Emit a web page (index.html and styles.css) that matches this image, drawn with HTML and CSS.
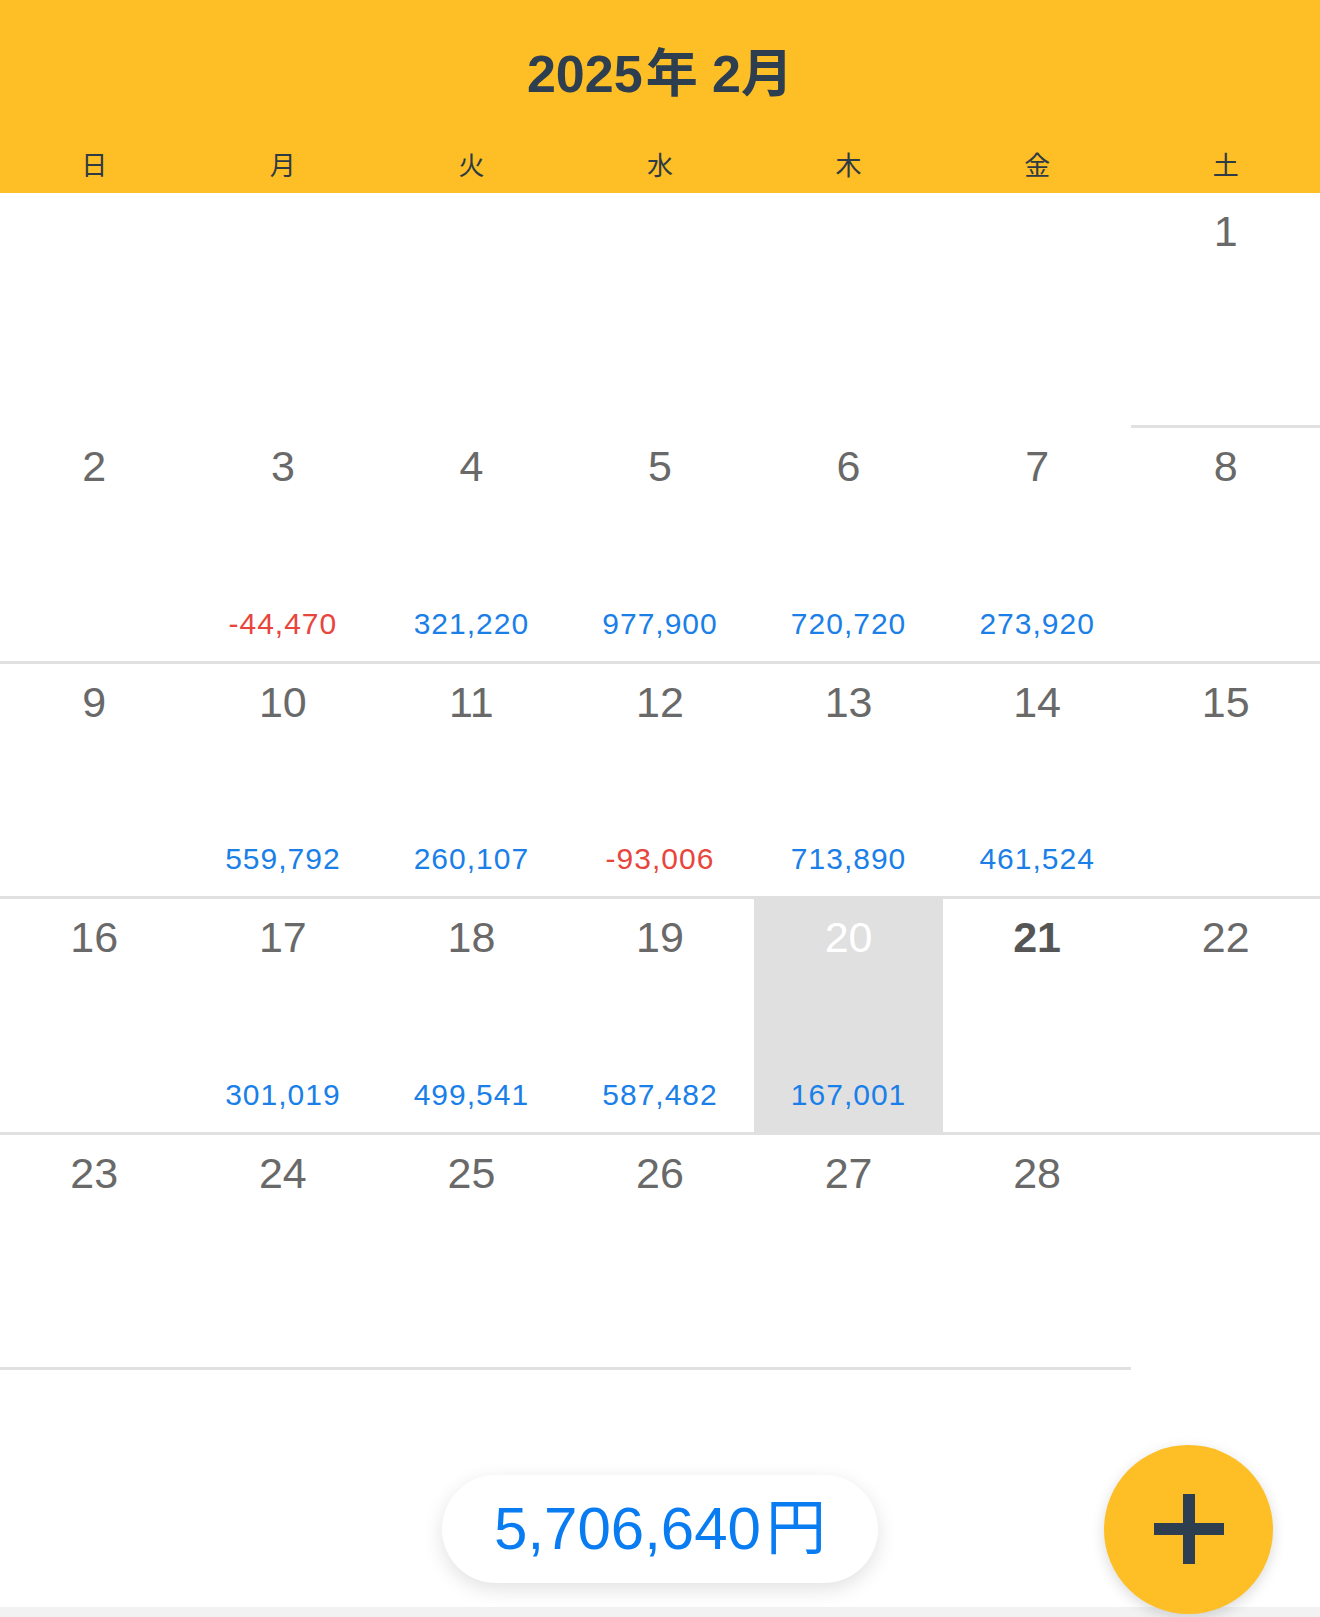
FILE: index.html
```html
<!DOCTYPE html>
<html lang="ja">
<head>
    <meta charset="UTF-8">
    <meta name="viewport" content="width=device-width, initial-scale=1.0">
    <title>カレンダー</title>
    <link rel="stylesheet" href="styles.css">
</head>
<body>
    <div class="app">
        <header class="calendar-header">
            <h1 class="month-title">2025<span class="unit">年</span> 2月</h1>
            <div class="weekdays">
                <span>日</span>
                <span>月</span>
                <span>火</span>
                <span>水</span>
                <span>木</span>
                <span>金</span>
                <span>土</span>
            </div>
        </header>

        <div class="calendar-grid">
            <!-- week 1 -->
            <div class="cell empty"></div>
            <div class="cell empty"></div>
            <div class="cell empty"></div>
            <div class="cell empty"></div>
            <div class="cell empty"></div>
            <div class="cell empty"></div>
            <div class="cell"><span class="day">1</span></div>

            <!-- week 2 -->
            <div class="cell"><span class="day">2</span></div>
            <div class="cell"><span class="day">3</span><span class="amount minus">-44,470</span></div>
            <div class="cell"><span class="day">4</span><span class="amount">321,220</span></div>
            <div class="cell"><span class="day">5</span><span class="amount">977,900</span></div>
            <div class="cell"><span class="day">6</span><span class="amount">720,720</span></div>
            <div class="cell"><span class="day">7</span><span class="amount">273,920</span></div>
            <div class="cell"><span class="day">8</span></div>

            <!-- week 3 -->
            <div class="cell"><span class="day">9</span></div>
            <div class="cell"><span class="day">10</span><span class="amount">559,792</span></div>
            <div class="cell"><span class="day">11</span><span class="amount">260,107</span></div>
            <div class="cell"><span class="day">12</span><span class="amount minus">-93,006</span></div>
            <div class="cell"><span class="day">13</span><span class="amount">713,890</span></div>
            <div class="cell"><span class="day">14</span><span class="amount">461,524</span></div>
            <div class="cell"><span class="day">15</span></div>

            <!-- week 4 -->
            <div class="cell"><span class="day">16</span></div>
            <div class="cell"><span class="day">17</span><span class="amount">301,019</span></div>
            <div class="cell"><span class="day">18</span><span class="amount">499,541</span></div>
            <div class="cell"><span class="day">19</span><span class="amount">587,482</span></div>
            <div class="cell selected"><span class="day">20</span><span class="amount">167,001</span></div>
            <div class="cell today"><span class="day">21</span></div>
            <div class="cell"><span class="day">22</span></div>

            <!-- week 5 -->
            <div class="cell"><span class="day">23</span></div>
            <div class="cell"><span class="day">24</span></div>
            <div class="cell"><span class="day">25</span></div>
            <div class="cell"><span class="day">26</span></div>
            <div class="cell"><span class="day">27</span></div>
            <div class="cell"><span class="day">28</span></div>
            <div class="cell empty"></div>
        </div>

        <footer class="calendar-footer">
            <div class="total-pill">5,706,640<span class="yen">円</span></div>
            <button class="add-btn" aria-label="追加">
                <svg width="70" height="70" viewBox="0 0 70 70">
                    <rect x="29" y="0" width="12" height="70" fill="#2c3e50"/>
                    <rect x="0" y="29" width="70" height="12" fill="#2c3e50"/>
                </svg>
            </button>
        </footer>

        <div class="bottom-bar"></div>
    </div>
</body>
</html>
```

FILE: styles.css
```css
body {
    margin: 0;
    font-family: 'Liberation Sans', 'Noto Sans CJK JP', sans-serif;
    background: white;
}

.app {
    position: relative;
    width: 1320px;
}

.calendar-header {
    background: #fdbe26;
    padding-top: 48px;
    height: 193px;
    box-sizing: border-box;
}

.month-title {
    margin: 0 0 40px;
    height: 52px;
    font-size: 52px;
    line-height: 52px;
    font-weight: bold;
    text-align: center;
    color: #2c3e50;
}

.month-title .unit {
    margin-left: 3px;
}

.weekdays {
    display: grid;
    grid-template-columns: repeat(7, 1fr);
    height: 53px;
    line-height: 53px;
    font-size: 26px;
    text-align: center;
    color: #2e3a44;
}

.calendar-grid {
    display: grid;
    grid-template-columns: repeat(7, 1fr);
    grid-auto-rows: 235.4px;
}

.cell {
    display: flex;
    flex-direction: column;
    align-items: center;
    box-sizing: border-box;
    padding: 17px 0 22px;
    border-bottom: 3px solid #e0e0e0;
}

.cell.empty {
    border-bottom: none;
}

.day {
    font-size: 43px;
    line-height: 1;
    color: #696969;
}

.amount {
    margin-top: auto;
    font-size: 30px;
    line-height: 1;
    letter-spacing: 1px;
    color: #1a7fe8;
}

.amount.minus {
    color: #e8453c;
}

.cell.selected {
    background: #e0e0e0;
}

.cell.selected .day {
    color: white;
}

.cell.today .day {
    font-weight: bold;
    color: #555;
}

.calendar-footer {
    position: relative;
    height: 237px;
    display: flex;
    justify-content: center;
    align-items: flex-end;
    padding-bottom: 24px;
    box-sizing: border-box;
}

.total-pill {
    background: white;
    padding: 24px 52px;
    border-radius: 54px;
    font-size: 60px;
    line-height: 60px;
    color: #0a7cf2;
    box-shadow: 0 6px 20px rgba(0,0,0,0.12);
}

.total-pill .yen {
    margin-left: 5px;
}

.add-btn {
    position: absolute;
    right: 47px;
    top: 75px;
    width: 169px;
    height: 169px;
    border: none;
    border-radius: 50%;
    background: #fdbe26;
    box-shadow: 0 4px 14px rgba(0,0,0,0.15);
    display: flex;
    align-items: center;
    justify-content: center;
    padding: 0;
    z-index: 2;
}

.bottom-bar {
    height: 10px;
    background: #f2f2f2;
}
```
